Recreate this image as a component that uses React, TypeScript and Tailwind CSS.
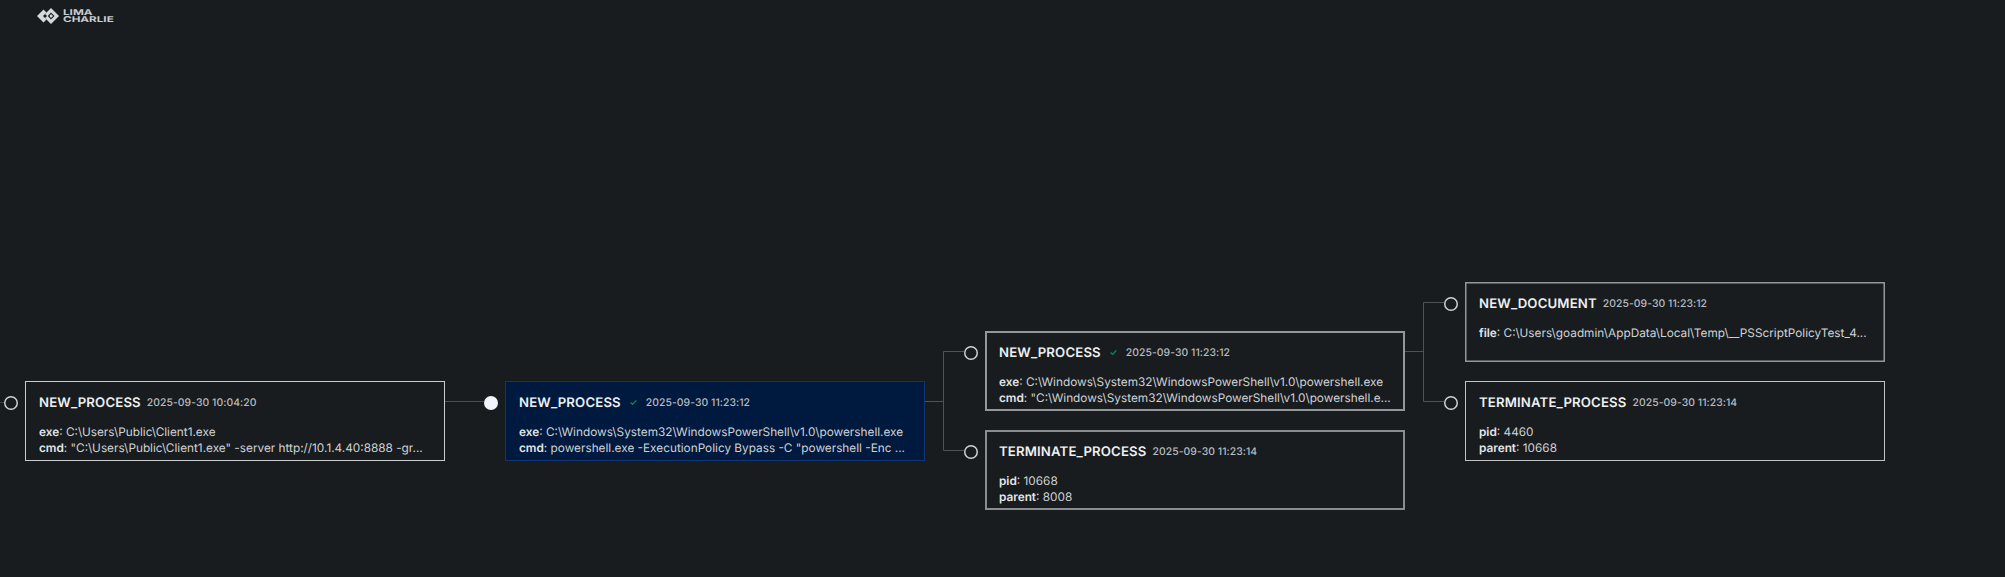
import React from "react";

type Row = { k: string; v: string };
type NodeData = {
  x: number; y: number; title: string; time: string; check?: boolean; rows: Row[];
  selected?: boolean; border: string;
};

const nodes: NodeData[] = [
  { x: 25, y: 381, title: "NEW_PROCESS", time: "2025-09-30 10:04:20", border: "shadow-[inset_0_0_0_1px_#c9cccf]", rows: [
    { k: "exe", v: "C:\\Users\\Public\\Client1.exe" },
    { k: "cmd", v: "\"C:\\Users\\Public\\Client1.exe\" -server http://10.1.4.40:8888 -gr..." },
  ] },
  { x: 505, y: 381, title: "NEW_PROCESS", time: "2025-09-30 11:23:12", check: true, selected: true, border: "shadow-[inset_0_0_0_1px_#0f3470]", rows: [
    { k: "exe", v: "C:\\Windows\\System32\\WindowsPowerShell\\v1.0\\powershell.exe" },
    { k: "cmd", v: "powershell.exe -ExecutionPolicy Bypass -C \"powershell -Enc ..." },
  ] },
  { x: 985, y: 331, title: "NEW_PROCESS", time: "2025-09-30 11:23:12", check: true, border: "shadow-[inset_0_0_0_2px_#94979a]", rows: [
    { k: "exe", v: "C:\\Windows\\System32\\WindowsPowerShell\\v1.0\\powershell.exe" },
    { k: "cmd", v: "\"C:\\Windows\\System32\\WindowsPowerShell\\v1.0\\powershell.e..." },
  ] },
  { x: 985, y: 430, title: "TERMINATE_PROCESS", time: "2025-09-30 11:23:14", border: "shadow-[inset_0_0_0_2px_#8a8d90]", rows: [
    { k: "pid", v: "10668" },
    { k: "parent", v: "8008" },
  ] },
  { x: 1465, y: 282, title: "NEW_DOCUMENT", time: "2025-09-30 11:23:12", border: "shadow-[inset_0_0_0_1.5px_#94979a]", rows: [
    { k: "file", v: "C:\\Users\\goadmin\\AppData\\Local\\Temp\\__PSScriptPolicyTest_4..." },
  ] },
  { x: 1465, y: 381, title: "TERMINATE_PROCESS", time: "2025-09-30 11:23:14", border: "shadow-[inset_0_0_0_1px_#c0c3c6]", rows: [
    { k: "pid", v: "4460" },
    { k: "parent", v: "10668" },
  ] },
];

function Check() {
  return (
    <svg width="7" height="7" viewBox="0 0 7 7" className="ml-[9px] mr-[9px] mb-[2px] shrink-0">
      <path d="M0.6 3.6 L2.6 5.4 L6.4 1.4" fill="none" stroke="#0f8a58" strokeWidth="1.3" />
    </svg>
  );
}

function Card({ n }: { n: NodeData }) {
  return (
    <div
      className={`absolute w-[420px] h-[80px] pl-[14px] pt-[12px] ${n.border} ${n.selected ? "bg-[#00193e]" : "bg-[#181c1f]"}`}
      style={{ left: n.x, top: n.y }}
    >
      <div className="flex items-center h-[20px]">
        <span className="text-[13.2px] leading-[20px] font-semibold text-[#eef0f2] tracking-[0.15px]">{n.title}</span>
        {n.check ? <Check /> : <span className="w-[6px]" />}
        <span className="text-[10.4px] leading-[20px] font-medium text-[#b9bcc0] tracking-[0.05px]">{n.time}</span>
      </div>
      <div className="mt-[12px] text-[11.8px] leading-[15.7px] text-[#d0d3d6] whitespace-nowrap">
        {n.rows.map((r) => (
          <div key={r.k}>
            <span className="font-semibold text-[#e4e6e8]">{r.k}</span>: {r.v}
          </div>
        ))}
      </div>
    </div>
  );
}

function Dot({ x, y, filled }: { x: number; y: number; filled?: boolean }) {
  return (
    <div
      className={`absolute w-[14px] h-[14px] rounded-full ${filled ? "bg-[#f2f5fb]" : "bg-[#181c1f] shadow-[inset_0_0_0_1.5px_#cfd2d5]"}`}
      style={{ left: x - 7, top: y - 7 }}
    />
  );
}

export default function App() {
  return (
    <div
      className="relative w-[2005px] h-[577px] overflow-hidden bg-[#181c1f] text-white [text-rendering:geometricPrecision]"
      style={{ fontFamily: "Inter, 'Noto Sans', sans-serif" }}
    >
      <div className="absolute left-[37px] top-[8px] flex items-center gap-[4px]">
        <svg width="22" height="16" viewBox="0 0 22 16">
          <path d="M0 8 L6.5 1.5 L9.5 4.5 L6 8 L9.5 11.5 L6.5 14.5 Z" fill="#d6d8da" />
          <path
            d="M14 0 L22 8 L14 16 L8 10 L10 8 L8 6 Z M14 4.5 L10.8 8 L14 11.5 L17.5 8 Z"
            fill="#d6d8da"
            fillRule="evenodd"
          />
          <path d="M14 6 L16 8 L14 10 L12.5 8 Z" fill="#d6d8da" />
        </svg>
        <div className="text-[#c9ccd0] text-[8px] leading-[7px] font-bold scale-x-[1.46] origin-left">
          <div>LIMA</div>
          <div>CHARLIE</div>
        </div>
      </div>

      <svg className="absolute inset-0" width="2005" height="577" fill="none">
        <path d="M0 402.5 H5" stroke="#3c4043" />
        <path d="M445 401.5 H484" stroke="#4a4e52" />
        <path d="M925 401.5 H943.5 M943.5 351.5 V450.5 M943.5 351.5 H965 M943.5 450.5 H965" stroke="#4e5256" />
        <path d="M1405 351.5 H1423.5 M1423.5 302.5 V401.5 M1423.5 302.5 H1445 M1423.5 401.5 H1445" stroke="#4e5256" />
      </svg>

      <Dot x={11} y={403} />
      <Dot x={490.5} y={403} filled />
      <Dot x={970.5} y={353} />
      <Dot x={970.5} y={452} />
      <Dot x={1450.5} y={304} />
      <Dot x={1450.5} y={403} />

      {nodes.map((n, i) => (
        <Card key={i} n={n} />
      ))}
    </div>
  );
}
